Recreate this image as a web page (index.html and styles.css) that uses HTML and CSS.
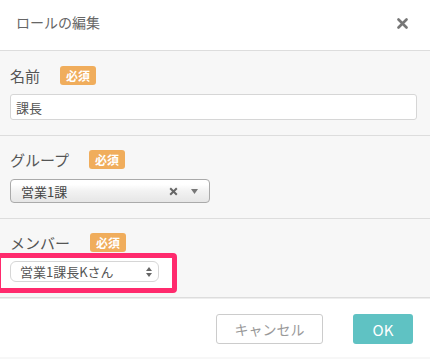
FILE: index.html
```html
<!DOCTYPE html>
<html lang="ja">
<head>
    <meta charset="UTF-8">
    <meta name="viewport" content="width=device-width, initial-scale=1.0">
    <title>ロールの編集</title>
    <link rel="stylesheet" href="styles.css">
</head>
<body>
    <div class="modal">
        <div class="modal-header">
            <h1 class="modal-title">ロールの編集</h1>
            <span class="close">
                <svg width="11" height="11" viewBox="0 0 11 11">
                    <path d="M1.5 1.5 L9.5 9.5 M9.5 1.5 L1.5 9.5" stroke="#777" stroke-width="2.6" stroke-linecap="round"/>
                </svg>
            </span>
        </div>

        <div class="section section-name">
            <div class="label-row">
                <label class="label">名前</label>
                <span class="badge">必須</span>
            </div>
            <input type="text" class="text-input" value="課長">
        </div>

        <div class="section section-group">
            <div class="label-row">
                <label class="label">グループ</label>
                <span class="badge">必須</span>
            </div>
            <div class="chosen">
                <span class="chosen-text">営業1課</span>
                <svg class="chosen-clear" width="9" height="9" viewBox="0 0 9 9">
                    <path d="M1.2 1.2 L7.8 7.8 M7.8 1.2 L1.2 7.8" stroke="#666" stroke-width="2"/>
                </svg>
                <svg class="chosen-arrow" width="7" height="5" viewBox="0 0 7 5">
                    <path d="M0 0 H7 L3.5 5 Z" fill="#777"/>
                </svg>
            </div>
        </div>

        <div class="section section-member">
            <div class="label-row">
                <label class="label">メンバー</label>
                <span class="badge">必須</span>
            </div>
            <div class="highlight">
                <div class="select">
                    <span class="select-text">営業1課長Kさん</span>
                    <svg width="6" height="10" viewBox="0 0 6 10">
                        <path d="M0 4 L3 0 L6 4 Z M0 6 L3 10 L6 6 Z" fill="#666"/>
                    </svg>
                </div>
            </div>
        </div>

        <div class="modal-footer">
            <button class="btn btn-cancel">キャンセル</button>
            <button class="btn btn-ok">OK</button>
        </div>
    </div>
</body>
</html>
```

FILE: styles.css
```css
body {
    margin: 0;
    padding: 0;
    background: #f7f7f7;
    font-family: 'Noto Sans CJK JP', 'Noto Sans', sans-serif;
    color: #555;
    overflow: hidden;
}
.modal {
    width: 430px;
    height: 359px;
    background: #f7f7f7;
}
.modal-header {
    height: 51px;
    background: #fff;
    border-bottom: 1px solid #ddd;
    display: flex;
    align-items: center;
    justify-content: space-between;
    padding: 0 22px 0 16px;
    box-sizing: border-box;
}
.modal-title {
    margin: 0;
    font-size: 14px;
    font-weight: normal;
    color: #666;
    padding-bottom: 6px;
}
.close {
    display: flex;
    padding-bottom: 4px;
}
.section {
    border-bottom: 1px solid #ddd;
    padding: 0 10px;
}
.section-name {
    padding-top: 15px;
    padding-bottom: 15px;
}
.section-group {
    padding-top: 14px;
    padding-bottom: 15px;
}
.section-member {
    padding-top: 14px;
    padding-bottom: 4px;
}
.label-row {
    display: flex;
    align-items: center;
    height: 19px;
}
.label {
    font-size: 15px;
    color: #555;
    margin-right: 20px;
}
.badge {
    background: #f0ad5c;
    color: #fff;
    font-size: 12px;
    font-weight: bold;
    line-height: 19px;
    padding: 0 6px;
    border-radius: 3px;
}
.text-input {
    display: block;
    margin-top: 9px;
    width: 407px;
    height: 26px;
    box-sizing: border-box;
    border: 1px solid #d6d6d6;
    border-radius: 3px;
    background: #fff;
    padding: 0 5px;
    font-family: inherit;
    font-size: 13px;
    color: #555;
    outline: none;
}
.chosen {
    margin-top: 10px;
    width: 200px;
    height: 24px;
    box-sizing: border-box;
    border: 1px solid #aaa;
    border-radius: 4px;
    background: linear-gradient(#fff 20%, #f2f2f2 50%, #e6e6e6 100%);
    display: flex;
    align-items: center;
    padding: 0 11px 0 10px;
}
.chosen-text {
    flex: 1;
    font-size: 13px;
    color: #444;
}
.chosen-clear {
    margin-right: 13px;
}
.highlight {
    margin-left: -14px;
    margin-top: 1px;
    width: 181px;
    height: 40px;
    box-sizing: border-box;
    border: 5px solid #ff2a6d;
    border-radius: 4px;
    background: #fff;
    padding: 3px 0 0 9px;
}
.select {
    width: 149px;
    height: 21px;
    box-sizing: border-box;
    border: 1px solid #d6d6d6;
    border-radius: 6px;
    background: #fff;
    display: flex;
    align-items: center;
    padding: 0 6px 0 9px;
}
.select-text {
    flex: 1;
    font-size: 13px;
    color: #555;
}
.modal-footer {
    background: #fff;
    border-top: 1px solid #eee;
    height: 59px;
    display: flex;
    justify-content: flex-end;
    align-items: flex-start;
    padding: 15px 17px 0 0;
    box-sizing: border-box;
    gap: 30px;
}
.btn {
    height: 30px;
    border-radius: 3px;
    font-family: inherit;
    cursor: pointer;
}
.btn-cancel {
    width: 107px;
    background: #fff;
    border: 1px solid #ccc;
    color: #999;
    font-size: 14px;
}
.btn-ok {
    width: 60px;
    background: #5fc2c3;
    border: none;
    color: #fff;
    font-size: 15px;
}
```
